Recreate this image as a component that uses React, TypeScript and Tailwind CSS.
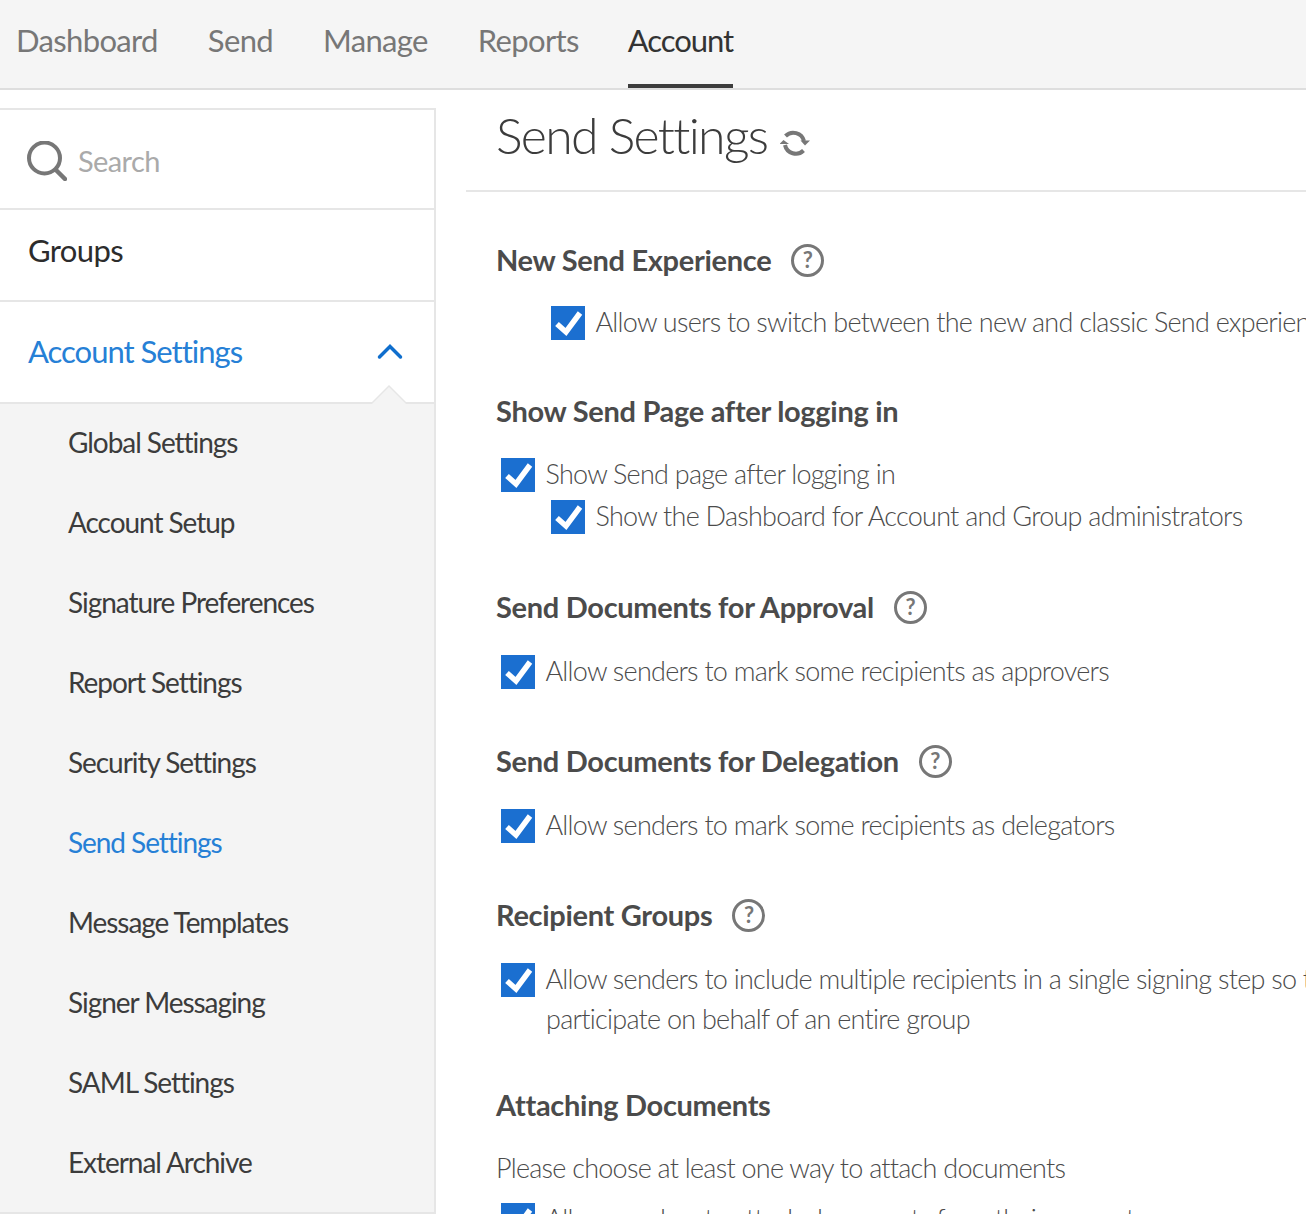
const nav = ["Dashboard", "Send", "Manage", "Reports", "Account"];
const subItems = [
  "Global Settings",
  "Account Setup",
  "Signature Preferences",
  "Report Settings",
  "Security Settings",
  "Send Settings",
  "Message Templates",
  "Signer Messaging",
  "SAML Settings",
  "External Archive",
];

function Check() {
  return (
    <span className="mt-[2px] block w-[34px] h-[34px] shrink-0 bg-[#1b6fd0]">
      <svg width="34" height="34" viewBox="0 0 34 34" fill="none">
        <path d="M6 18l9 8L29 7" stroke="#fff" strokeWidth="5.5" />
      </svg>
    </span>
  );
}

function Help() {
  return (
    <span className="mt-[2px] flex w-[33px] h-[33px] items-center justify-center rounded-full border-[3px] border-[#777] text-[22px] font-bold leading-none text-[#777]">
      ?
    </span>
  );
}

function Heading({ children, help }: { children: string; help?: boolean }) {
  return (
    <div className="flex h-[36px] items-center gap-[20px]">
      <h3 className="text-[29px] font-bold leading-none tracking-[-0.3px] text-[#4b4b4b]">{children}</h3>
      {help && <Help />}
    </div>
  );
}

function Row({ children, indent }: { children: string; indent?: boolean }) {
  return (
    <label className={`flex h-[42px] items-center gap-[10.5px] whitespace-nowrap text-[27px] font-light tracking-[-0.75px] text-[#4b4b4b] ${indent ? "ml-[55px]" : "ml-[5px]"}`}>
      <Check />
      <span>{children}</span>
    </label>
  );
}

export default function App() {
  return (
    <div className="h-[1216px] w-[1306px] bg-white">
      <div className="h-[1214px] overflow-hidden font-['Lato','Noto_Sans',sans-serif]">
        <header className="flex h-[90px] gap-[50px] border-b-2 border-[#dedede] bg-[#f5f5f5] pl-[16px]">
          {nav.map((n) => (
            <a
              key={n}
              className={`flex h-[88px] items-center pb-[7px] text-[31px] ${n === "Account" ? "-ml-[1px] border-b-4 border-[#3c3c3c] pt-1 tracking-[-1.05px] text-[#333]" : "tracking-[-0.65px] text-[#777]"}`}
            >
              {n}
            </a>
          ))}
        </header>
        <div className="flex">
          <aside className="mt-[18px] w-[436px] shrink-0 border-t-2 border-r-2 border-[#e6e6e6]">
            <div className="flex h-[100px] items-center gap-[11px] border-b-2 border-[#e6e6e6] pl-[27px]">
              <svg width="40" height="40" viewBox="0 0 40 40" fill="none" className="mt-[4px] shrink-0">
                <circle cx="17.5" cy="17" r="15.5" stroke="#777" strokeWidth="4" />
                <path d="M29 29l9 9" stroke="#777" strokeWidth="4.5" strokeLinecap="round" />
              </svg>
              <span className="mt-1 text-[29px] tracking-[-0.6px] text-[#aaa]">Search</span>
            </div>
            <div className="flex h-[92px] items-center border-b-2 border-[#e6e6e6] pb-[10px] pl-[28px] text-[31px] tracking-[-0.6px] text-[#2c2c2c]">
              Groups
            </div>
            <div className="relative flex h-[102px] items-center justify-between border-b-2 border-[#e6e6e6] pb-[2px] pl-[28px] pr-[31px] text-[31px] tracking-[-1px] text-[#2680d6]">
              Account Settings
              <svg width="26" height="17" viewBox="0 0 26 17" fill="none">
                <path d="M2.5 14L13 3.500l10.500 10.500" stroke="#0f6ecd" strokeWidth="3.5" strokeLinecap="round" />
              </svg>
              <span className="absolute bottom-[-2px] right-[26px] h-0 w-0 border-x-[19px] border-b-[19px] border-x-transparent border-b-[#e6e6e6]" />
              <span className="absolute bottom-[-2px] right-[28px] h-0 w-0 border-x-[17px] border-b-[17px] border-x-transparent border-b-[#f4f4f4]" />
            </div>
            <ul className="border-b-2 border-[#e6e6e6] bg-[#f4f4f4] pb-[8px] pl-[68px]">
              {subItems.map((s) => (
                <li key={s} className={`flex h-[80px] items-center pb-[4px] text-[28px] tracking-[-1.05px] ${s === "Send Settings" ? "text-[#2680d6]" : "text-[#3c3c3c]"}`}>
                  {s}
                </li>
              ))}
            </ul>
          </aside>
          <main className="ml-[30px] min-w-0 flex-1">
            <div className="flex h-[102px] items-center gap-[13px] border-b-2 border-[#e6e6e6] pb-[10px] pl-[30px]">
              <h1 className="text-[50px] font-light tracking-[-1.7px] text-[#3c3c3c]">Send Settings</h1>
              <svg width="31" height="30" viewBox="0 0 31 30" fill="none" className="mt-[16px]">
                <path d="M5.500 8A11 11 0 0 1 24 13" stroke="#777" strokeWidth="4" />
                <path d="M20.500 12.500h9.500L25 17.500z" fill="#777" />
                <path d="M23.500 22.500A11 11 0 0 1 5 17" stroke="#777" strokeWidth="4" />
                <path d="M-0.500 16h9.500L3.500 12z" fill="#777" />
              </svg>
            </div>
            <div className="pl-[30px] pt-[49px]">
              <Heading help>New Send Experience</Heading>
              <div className="mt-[24px]"><Row indent>Allow users to switch between the new and classic Send experience</Row></div>
              <div className="mt-[49px]"><Heading>Show Send Page after logging in</Heading></div>
              <div className="mt-[25px]"><Row>Show Send page after logging in</Row><Row indent>Show the Dashboard for Account and Group administrators</Row></div>
              <div className="mt-[51px]"><Heading help>Send Documents for Approval</Heading></div>
              <div className="mt-[26px]"><Row>Allow senders to mark some recipients as approvers</Row></div>
              <div className="mt-[50px]"><Heading help>Send Documents for Delegation</Heading></div>
              <div className="mt-[26px]"><Row>Allow senders to mark some recipients as delegators</Row></div>
              <div className="mt-[50px]"><Heading help>Recipient Groups</Heading></div>
              <div className="mt-[26px]">
                <Row>Allow senders to include multiple recipients in a single signing step so that any one</Row>
                <p className="ml-[50px] whitespace-nowrap text-[27px] font-light leading-[38px] tracking-[-0.75px] text-[#4b4b4b]">participate on behalf of an entire group</p>
              </div>
              <div className="mt-[48px]"><Heading>Attaching Documents</Heading></div>
              <p className="mt-[25px] text-[27px] font-light leading-[42px] tracking-[-0.75px] text-[#4b4b4b]">Please choose at least one way to attach documents</p>
              <div className="mt-[9px]"><Row>Allow senders to attach documents from their computer</Row></div>
            </div>
          </main>
        </div>
      </div>
    </div>
  );
}
